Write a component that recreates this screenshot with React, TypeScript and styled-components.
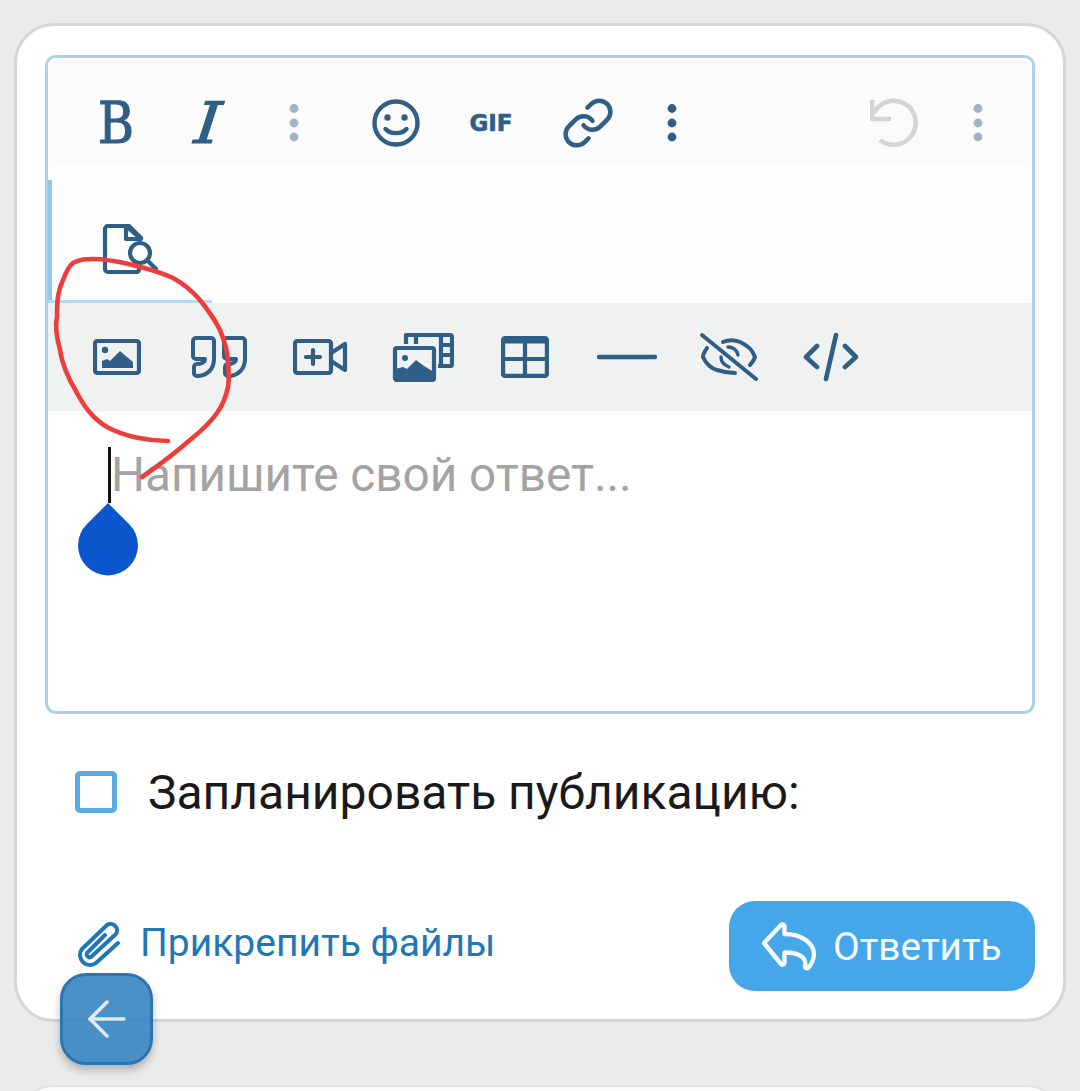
import React from "react";
import styled, { createGlobalStyle } from "styled-components";
import { ArrowLeft, Link as LinkIcon } from "lucide-react";

const ink = "#2f5f86";

const GlobalStyle = createGlobalStyle`
  html, body {
    margin: 0;
    height: 1091px;
    overflow: hidden;
    background: #ebebeb;
    font-family: Roboto, "Liberation Sans", sans-serif;
  }
`;

const Page = styled.div`
  position: relative;
  height: 1091px;
  box-sizing: border-box;
  padding: 23px 14px 0;
  overflow: hidden;
`;

const Card = styled.div`
  height: 999px;
  box-sizing: border-box;
  padding: 29px 28px 0;
  background: #fff;
  border: 3px solid #d6d6d6;
  border-radius: 40px;
`;

const NextCard = styled.div`
  height: 120px;
  margin-top: 63px;
  background: #fafcfc;
  border: 2px solid #e0e0e0;
  border-radius: 40px;
`;

const Editor = styled.div`
  position: relative;
  height: 659px;
  box-sizing: border-box;
  border: 3px solid #a9d3ea;
  border-radius: 11px;
  overflow: hidden;
  background: #fff;
`;

const ToolRow = styled.div`
  display: flex;
  align-items: center;
  height: 84px;
  padding: 23px 34px 0 22px;
  background: #fbfbfc;
`;

const PreviewRow = styled.div`
  position: relative;
  display: flex;
  align-items: center;
  height: 138px;
  padding: 31px 0 0 37px;
  box-sizing: border-box;
  background: #fdfdfd;
  &::before {
    content: "";
    position: absolute;
    left: 0;
    top: 15px;
    bottom: 3px;
    width: 4px;
    background: #8fc8e8;
  }
  &::after {
    content: "";
    position: absolute;
    left: 0;
    bottom: 0;
    width: 164px;
    height: 3px;
    background: #b5d9ef;
  }
`;

const InsertRow = styled.div`
  display: flex;
  align-items: center;
  height: 108px;
  padding-left: 18px;
  background: #f0f1f1;
`;

const ToolButton = styled.div<{ $w: number; $gap?: number }>`
  display: flex;
  flex: none;
  align-items: center;
  justify-content: center;
  width: ${(p) => p.$w}px;
  height: 84px;
  margin-left: ${(p) => p.$gap ?? 0}px;
  color: ${ink};
`;

const Spacer = styled.div`
  flex: 1;
`;

const SerifGlyph = styled.span<{ $italic?: boolean }>`
  display: block;
  font-family: "DejaVu Serif", serif;
  font-size: 57px;
  line-height: 1;
  font-style: ${(p) => (p.$italic ? "italic" : "normal")};
  -webkit-text-stroke: 1.2px ${ink};
  transform: ${(p) => (p.$italic ? "scaleX(1.15) skewX(-5deg)" : "scaleX(0.86)")};
`;

const GifLabel = styled.span`
  font-family: "DejaVu Sans", sans-serif;
  font-weight: 700;
  font-size: 23px;
  line-height: 1;
  -webkit-text-stroke: 0.6px ${ink};
`;

const EditArea = styled.div`
  position: relative;
  height: 300px;
  padding: 36px 0 0 63px;
  box-sizing: border-box;
  font-size: 47.7px;
  line-height: 56px;
  color: #a3a3a3;
`;

const Caret = styled.div`
  position: absolute;
  left: 60px;
  top: 36px;
  width: 3px;
  height: 56px;
  background: #111;
`;

const CaretHandle = styled.svg`
  position: absolute;
  left: 30px;
  top: 92px;
`;

const ScheduleRow = styled.label`
  display: flex;
  align-items: center;
  gap: 31px;
  margin: 57px 0 0 30px;
  height: 42px;
  font-size: 48px;
  color: #1a1a1a;
`;

const CheckBox = styled.span`
  flex: none;
  width: 42px;
  height: 42px;
  box-sizing: border-box;
  border: 5px solid #5aa9e0;
  border-radius: 5px;
  background: #fdfeff;
`;

const Footer = styled.div`
  display: flex;
  align-items: center;
  justify-content: space-between;
  margin-top: 88px;
`;

const AttachLink = styled.a`
  display: flex;
  align-items: center;
  gap: 19px;
  margin: 0 0 6px 32px;
  font-size: 39px;
  line-height: 46px;
  color: #1f77b4;
`;

const ReplyButton = styled.button`
  display: flex;
  align-items: center;
  gap: 16px;
  width: 306px;
  height: 90px;
  padding: 0 0 0 32px;
  box-sizing: border-box;
  border: 0;
  border-radius: 26px;
  background: #46a6ea;
  color: #f4fbff;
  font-family: inherit;
  font-size: 38.8px;
`;

const BackButton = styled.div`
  position: absolute;
  left: 60px;
  top: 973px;
  display: flex;
  align-items: center;
  justify-content: center;
  width: 93px;
  height: 92px;
  box-sizing: border-box;
  border: 3px solid #2c76b0;
  border-radius: 26px;
  background: rgba(62, 136, 196, 0.93);
  box-shadow: 0 5px 8px rgba(0, 0, 0, 0.25);
  color: #dcebf6;
`;

const Scribble = styled.svg`
  position: absolute;
  left: 0;
  top: 0;
  pointer-events: none;
`;

const Dots = ({ color }: { color: string }) => (
  <svg width="12" height="40" viewBox="0 0 12 40" fill={color}>
    <circle cx="6" cy="5.5" r="4.4" />
    <circle cx="6" cy="20" r="4.4" />
    <circle cx="6" cy="34" r="4.4" />
  </svg>
);

const Smile = () => (
  <svg width="48" height="48" viewBox="0 0 48 48" fill="none" stroke={ink} strokeWidth="4.4" strokeLinecap="round">
    <circle cx="24" cy="24" r="21.5" />
    <circle cx="15.5" cy="18.5" r="3.2" fill={ink} stroke="none" />
    <circle cx="32.5" cy="18.5" r="3.2" fill={ink} stroke="none" />
    <path d="M13.5 30c5 5.5 16 5.5 21 0" />
  </svg>
);

const UndoIcon = () => (
  <svg width="50" height="50" viewBox="0 0 50 50" fill="none" stroke="#d4d4d4" strokeWidth="4.6" strokeLinejoin="round">
    <path d="M2 2v19h19" />
    <path d="M4 15A22 22 0 1 1 10 42" />
  </svg>
);

const FilePreview = () => (
  <svg width="58" height="52" viewBox="0 0 58 52" fill="none" stroke={ink} strokeWidth="4.2" strokeLinecap="round" strokeLinejoin="round">
    <path d="M39 14 27 2H6a3 3 0 0 0-3 3v40a3 3 0 0 0 3 3h28a3 3 0 0 0 3-2" />
    <path d="M24 2v13h15z" />
    <circle cx="38" cy="29" r="10" />
    <path d="M45.5 36.500 54 45" />
  </svg>
);

const ImageIcon = () => (
  <svg width="48" height="36" viewBox="0 0 48 36" fill="none" stroke={ink} strokeWidth="4.2" strokeLinejoin="round">
    <rect x="2" y="2" width="44" height="32" rx="2.5" />
    <circle cx="12" cy="11" r="3.2" fill={ink} stroke="none" />
    <path d="M9 29v-7l5-2 3 2 10-10 7 6 6 5v6z" fill={ink} stroke="none" />
  </svg>
);

const QuoteIcon = () => (
  <svg width="56" height="42" viewBox="0 0 56 42" fill="none" stroke={ink} strokeWidth="4" strokeLinejoin="round">
    <path d="M5 2h15a3 3 0 0 1 3 3v18c0 10-7 17-17 17a3 3 0 0 1-3-3v-6a3 3 0 0 1 3-3c3 0 8-1 8-5H5a3 3 0 0 1-3-3V5a3 3 0 0 1 3-3z" />
    <path d="M36 2h15a3 3 0 0 1 3 3v18c0 10-7 17-17 17a3 3 0 0 1-3-3v-6a3 3 0 0 1 3-3c3 0 8-1 8-5H36a3 3 0 0 1-3-3V5a3 3 0 0 1 3-3z" />
  </svg>
);

const VideoIcon = () => (
  <svg width="56" height="36" viewBox="0 0 56 36" fill="none" stroke={ink} strokeWidth="4.2" strokeLinejoin="round" strokeLinecap="round">
    <rect x="2" y="2" width="36" height="32" rx="2.5" />
    <path d="M20 11v14M13 18h14" />
    <path d="m38 14 14-9v26l-14-9" />
  </svg>
);

const GalleryIcon = () => (
  <svg width="62" height="50" viewBox="0 0 62 50" fill="none" stroke={ink} strokeWidth="4.2" strokeLinejoin="round">
    <path d="M14 12V3h44a2 2 0 0 1 2 2v27a2 2 0 0 1-2 2h-12" />
    <path d="M24 3v9M49 3v30M49 13h10M49 23h10" />
    <rect x="3" y="16" width="39" height="32" rx="2" />
    <circle cx="13" cy="26" r="3" fill={ink} stroke="none" />
    <path d="M3 48V37l8-2 4 2 9-9 8 6 10 6v8z" fill={ink} stroke="none" />
  </svg>
);

const TableIcon = () => (
  <svg width="48" height="42" viewBox="0 0 48 42" fill="none" stroke={ink} strokeLinejoin="round">
    <rect x="2" y="2" width="44" height="38" rx="2.5" strokeWidth="4.4" />
    <path d="M2 5h44" strokeWidth="5" />
    <path d="M24 4v36M2 23h44" strokeWidth="4.2" />
  </svg>
);

const RuleIcon = () => (
  <svg width="60" height="6" viewBox="0 0 60 6" stroke={ink} strokeWidth="4.4" strokeLinecap="round">
    <path d="M2 3h56" />
  </svg>
);

const HiddenIcon = () => (
  <svg width="60" height="50" viewBox="0 0 60 50" fill="none" stroke={ink} strokeWidth="4" strokeLinecap="round">
    <path d="M3 3l54 44" />
    <path d="M8 16c-2 3-4 6-4 9 3 7 9 12 14 13 6 2 12 3 18 3" />
    <path d="M24 10c5-2 12-2 17 0 7 3 13 9 15 15-1 3-3 6-5 8" />
    <path d="M22 25c0 4 3 8 8 10" strokeWidth="3.4" />
    <path d="M29 15c5 0 9 3 10 8" strokeWidth="3.4" />
  </svg>
);

const CodeIcon = () => (
  <svg width="56" height="50" viewBox="0 0 56 50" fill="none" stroke={ink} strokeWidth="4.6" strokeLinecap="round" strokeLinejoin="round">
    <path d="M14 14 3 25l11 10M42 14l11 11-11 10M33 3l-10 44" />
  </svg>
);

const ClipIcon = () => (
  <svg width="44" height="48" viewBox="0 0 44 48" fill="none" stroke="#1f77b4" strokeWidth="4" strokeLinecap="round" strokeLinejoin="round">
    <path d="M41 24 19 44A10 10 0 0 1 5 30L30 6a6.500 6.500 0 0 1 9 9L14 38a3 3 0 0 1-4-4L28 16" />
  </svg>
);

const ReplyIcon = () => (
  <svg width="56" height="50" viewBox="0 0 56 50" fill="none" stroke="#f4fbff" strokeWidth="4.400" strokeLinejoin="round">
    <path d="M3 22 20 4a2 2 0 0 1 3.500 1.500V13C40 13 53 22 53 33c0 5-3 11-6 14-2 1-3.500-.5-3-2.500 1-4 0-13-20.500-13v10a2 2 0 0 1-3.500 1.500z" />
  </svg>
);

const insertIcons = [ImageIcon, QuoteIcon, VideoIcon, GalleryIcon, TableIcon, RuleIcon, HiddenIcon, CodeIcon];

function App() {
  return (
    <Page>
      <GlobalStyle />
      <Card>
        <Editor>
          <ToolRow>
            <ToolButton $w={92}><SerifGlyph>B</SerifGlyph></ToolButton>
            <ToolButton $w={92}><SerifGlyph $italic>I</SerifGlyph></ToolButton>
            <ToolButton $w={80}><Dots color="#9fb3c4" /></ToolButton>
            <ToolButton $w={124}><Smile /></ToolButton>
            <ToolButton $w={66}><GifLabel>GIF</GifLabel></ToolButton>
            <ToolButton $w={128}><LinkIcon size={54} strokeWidth={2} /></ToolButton>
            <ToolButton $w={40}><Dots color={ink} /></ToolButton>
            <Spacer />
            <ToolButton $w={80}><UndoIcon /></ToolButton>
            <ToolButton $w={40} $gap={23}><Dots color="#9fb3c4" /></ToolButton>
          </ToolRow>
          <PreviewRow>
            <ToolButton $w={92}><FilePreview /></ToolButton>
          </PreviewRow>
          <InsertRow>
            {insertIcons.map((Icon, i) => (
              <ToolButton $w={102} key={i}><Icon /></ToolButton>
            ))}
          </InsertRow>
          <EditArea>
            Напишите свой ответ...
            <Caret />
            <CaretHandle width="60" height="74" viewBox="0 0 60 74">
              <path d="M30 0 9 21a30 30 0 1 0 42 0z" fill="#0c56cc" />
            </CaretHandle>
          </EditArea>
        </Editor>
        <ScheduleRow>
          <CheckBox />
          Запланировать публикацию:
        </ScheduleRow>
        <Footer>
          <AttachLink><ClipIcon />Прикрепить файлы</AttachLink>
          <ReplyButton><ReplyIcon />Ответить</ReplyButton>
        </Footer>
      </Card>
      <NextCard />
      <BackButton><ArrowLeft size={58} strokeWidth={1.5} /></BackButton>
      <Scribble width="1080" height="1091" viewBox="0 0 1080 1091" fill="none">
        <path
          d="M168 441C150 441 125 437 107 427C92 418 84 406 77 393C68 378 62 365 60 350C56 335 55 325 57 317C57 300 58 290 63 280C66 272 69 266 73 263C80 259 86 259 93 259C108 259 120 262 133 265C148 269 161 272 173 278C184 284 193 292 200 300C208 310 215 320 220 330C225 342 228 352 228 363C229 372 229 380 228 387C226 397 222 406 217 413C210 423 200 432 190 440C175 453 158 466 142 477"
          stroke="#ee3d3d"
          strokeWidth="4.6"
          strokeLinecap="round"
        />
      </Scribble>
    </Page>
  );
}

export default App;
